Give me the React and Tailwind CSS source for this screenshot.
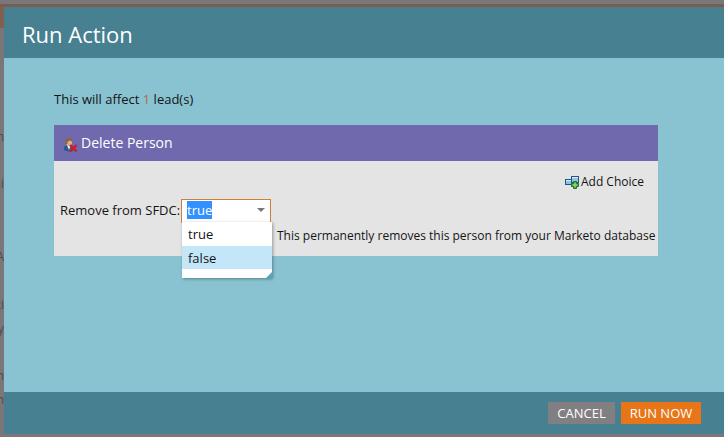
import { useEffect, useRef, useState } from "react";

const rowFragments = [
  { text: "n", gap: "mt-[101px]" },
  { text: "ni", gap: "mt-[31px]" },
  { text: "A", gap: "mt-[57px]" },
  { text: "ti", gap: "mt-8" },
  { text: "y", gap: "mt-2" },
  { text: "n", gap: "mt-[31px]" },
  { text: "n", gap: "mt-2" },
];

export default function App() {
  return (
    <div className="min-h-screen flex flex-col bg-[#7b7679] font-['Open_Sans',sans-serif] text-[#141414]">
      {/* PAGE BEHIND THE DIALOG */}
      <div className="h-1" />
      <div className="h-[3px] bg-[#795d51]" />

      <div className="flex flex-1 items-stretch pb-[3px]">
        <PageEdge />

        <section
          role="dialog"
          aria-labelledby="dialog-title"
          className="flex flex-1 flex-col bg-[#89c3d2]"
        >
          <header className="bg-[#478091] px-[18px] pt-3 pb-[9px]">
            <h1 id="dialog-title" className="text-[22px] leading-[30px] text-white">
              Run Action
            </h1>
          </header>

          <main className="flex-1 pt-[31px] pr-[66px] pb-8 pl-[50px]">
            <p className="text-[13px] leading-5">
              This will affect <span className="text-[#b9674a]">1</span> lead(s)
            </p>
            <DeletePersonPanel />
          </main>

          <footer className="flex justify-end gap-1.5 bg-[#478091] pt-2.5 pr-[23px] pb-2.5">
            <button className="h-[22px] w-[67px] bg-[#827f83] text-[13px] leading-5 text-white">
              CANCEL
            </button>
            <button className="h-[22px] w-20 bg-[#e87518] text-[13px] leading-5 text-white">
              RUN NOW
            </button>
          </footer>
        </section>
      </div>
    </div>
  );
}

/* SLIVER OF THE PAGE LEFT OF THE DIALOG */
function PageEdge() {
  return (
    <div aria-hidden="true" className="w-1 overflow-hidden text-xs leading-4 text-[#4f4b4e]">
      <div className="h-[21px] bg-[#80604f]" />
      {rowFragments.map((row, i) => (
        <div key={i} className={`flex justify-end ${row.gap}`}>
          {row.text}
        </div>
      ))}
    </div>
  );
}

/* ACTION PANEL */
function DeletePersonPanel() {
  return (
    <div className="mt-4 bg-[#e4e4e4]">
      <h2 className="flex h-9 items-center gap-1 bg-[#7169ae] px-2.5 text-sm font-medium text-white">
        <PersonDeleteIcon />
        Delete Person
      </h2>

      <div className="flex justify-end pt-3 pr-3.5">
        <button className="flex items-center gap-0.5 text-xs leading-[18px]">
          <AddChoiceIcon />
          Add Choice
        </button>
      </div>

      <div className="flex items-start pt-2 pb-[11px] pl-1.5">
        <label htmlFor="remove-sfdc" className="w-[121px] shrink-0 pt-px text-[13px] leading-5">
          Remove from SFDC:
        </label>
        <ComboBox />
        <p className="ml-1.5 pt-7 text-xs leading-[18px] whitespace-nowrap">
          This permanently removes this person from your Marketo database
        </p>
      </div>
    </div>
  );
}

/* COMBO BOX */
function ComboBox() {
  const inputRef = useRef(null);
  const [value, setValue] = useState("true");

  useEffect(() => {
    inputRef.current.focus();
    inputRef.current.select();
  }, []);

  return (
    <div className="relative w-[90px] shrink-0">
      <div className="flex h-6 items-center border border-[#cf7e38] bg-white pr-[5px] pb-0.5 pl-[5px]">
        <input
          id="remove-sfdc"
          ref={inputRef}
          role="combobox"
          aria-expanded="true"
          aria-controls="remove-sfdc-options"
          value={value}
          onChange={(e) => setValue(e.target.value)}
          className="w-0 flex-1 bg-transparent text-[13px] leading-[18px] caret-transparent outline-none selection:bg-[#3390ff] selection:text-white"
        />
        <svg width="8" height="4" viewBox="0 0 8 4" fill="#777">
          <path d="M0 0h8L4 4z" />
        </svg>
      </div>

      <div className="absolute top-[23px] left-px w-[90px] bg-white pb-[9px] text-[13px] leading-6 shadow-[1px_1px_3px_rgba(0,0,0,0.35)]">
        <ul id="remove-sfdc-options" role="listbox">
          <li role="option" aria-selected="false" className="h-6 px-1.5" onClick={() => setValue("true")}>
            true
          </li>
          <li role="option" aria-selected="true" className="h-[23px] bg-[#c3e7f9] px-1.5" onClick={() => setValue("false")}>
            false
          </li>
        </ul>
        <svg className="absolute right-0 bottom-0" width="6" height="6" viewBox="0 0 6 6" fill="#5b9fc6">
          <path d="M6 0v6H0z" />
        </svg>
      </div>
    </div>
  );
}

function PersonDeleteIcon() {
  return (
    <svg width="13" height="14" viewBox="0 0 13 14" className="mt-1">
      <path d="M0 12V9.5Q.5 7.5 3 7h4q2 .5 2 3v3Q5 14.500 0 12z" fill="#245b8c" />
      <path d="M3 7h4L5 12z" fill="#f0ece4" />
      <ellipse cx="5" cy="4.500" rx="3" ry="3.500" fill="#dfae84" />
      <path d="M1.500 6Q.5 .5 4.500 0q4-.3 4 3.500L5.500 2.500 3.500 4v2z" fill="#8a6540" />
      <path d="M6 7l6.500 6.500M12.500 7L6 13.500" stroke="#c81e2d" strokeWidth="2.400" />
    </svg>
  );
}

function AddChoiceIcon() {
  return (
    <svg width="14" height="14" viewBox="0 0 14 14">
      <rect x="0.5" y="4.500" width="6" height="5" fill="#8cc4e8" stroke="#24577f" />
      <rect x="6.500" y="1.500" width="7" height="6" fill="#8cc4e8" stroke="#24577f" />
      <path d="M1 5.500h5M7 2.500h6" stroke="#d6effb" />
      <path d="M8.500 6.500h3v2h2v3h-2v2h-3v-2h-2v-3h2z" fill="#55ad46" stroke="#24702b" />
      <path d="M10 8v4M8 10h4" stroke="#9bdb7c" />
    </svg>
  );
}
